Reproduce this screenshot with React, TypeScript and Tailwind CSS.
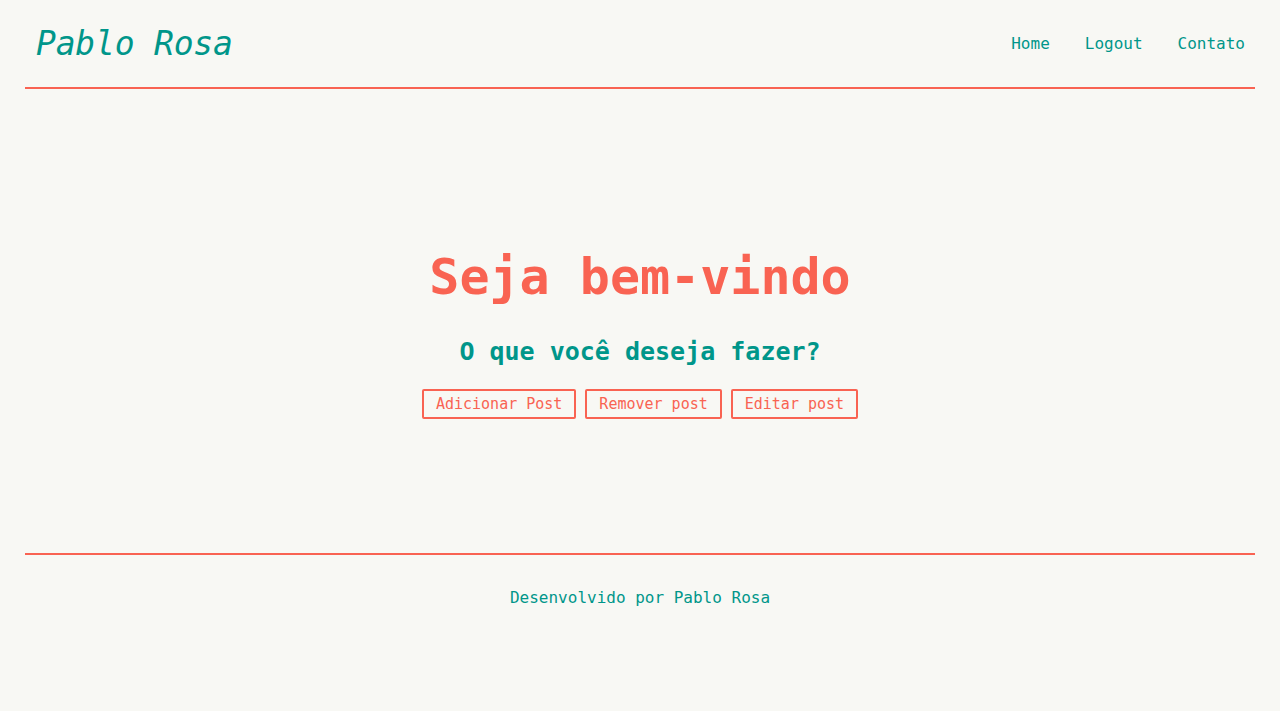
export default function App() {
  const buttons = ['Adicionar Post', 'Remover post', 'Editar post'];

  return (
    <div className="min-h-[711px] bg-[#f8f8f4] px-[25px] font-['DejaVu_Sans_Mono','Liberation_Mono',monospace]">
      <header className="h-[89px] flex items-center justify-between border-b-2 border-[#f96352] pl-[11px] pr-[10px]">
        <h1 className="text-[33px] italic font-light text-[#00968a] tracking-[-0.2px]">Pablo Rosa</h1>
        <nav className="flex items-center gap-[35px] text-[16px] text-[#00968a]">
          <a href="#">Home</a>
          <a href="#">Logout</a>
          <a href="#">Contato</a>
        </nav>
      </header>

      <main className="h-[464px] flex flex-col items-center pt-[157px]">
        <h2 className="text-[50px] leading-[62px] font-bold text-[#f96352]">Seja bem-vindo</h2>
        <h3 className="mt-[29px] text-[25px] leading-[30px] font-bold text-[#00968a]">O que você deseja fazer?</h3>
        <div className="mt-[22px] flex gap-[9px]">
          {buttons.map((b) => (
            <button
              key={b}
              className="h-[30px] px-[12px] border-2 border-[#f96352] rounded-[2px] text-[15px] text-[#f96352]"
            >
              {b}
            </button>
          ))}
        </div>
      </main>

      <footer className="border-t-2 border-[#f96352] pt-[31px] text-center">
        <p className="text-[16px] leading-[24px] text-[#00968a]">Desenvolvido por Pablo Rosa</p>
      </footer>
    </div>
  );
}
